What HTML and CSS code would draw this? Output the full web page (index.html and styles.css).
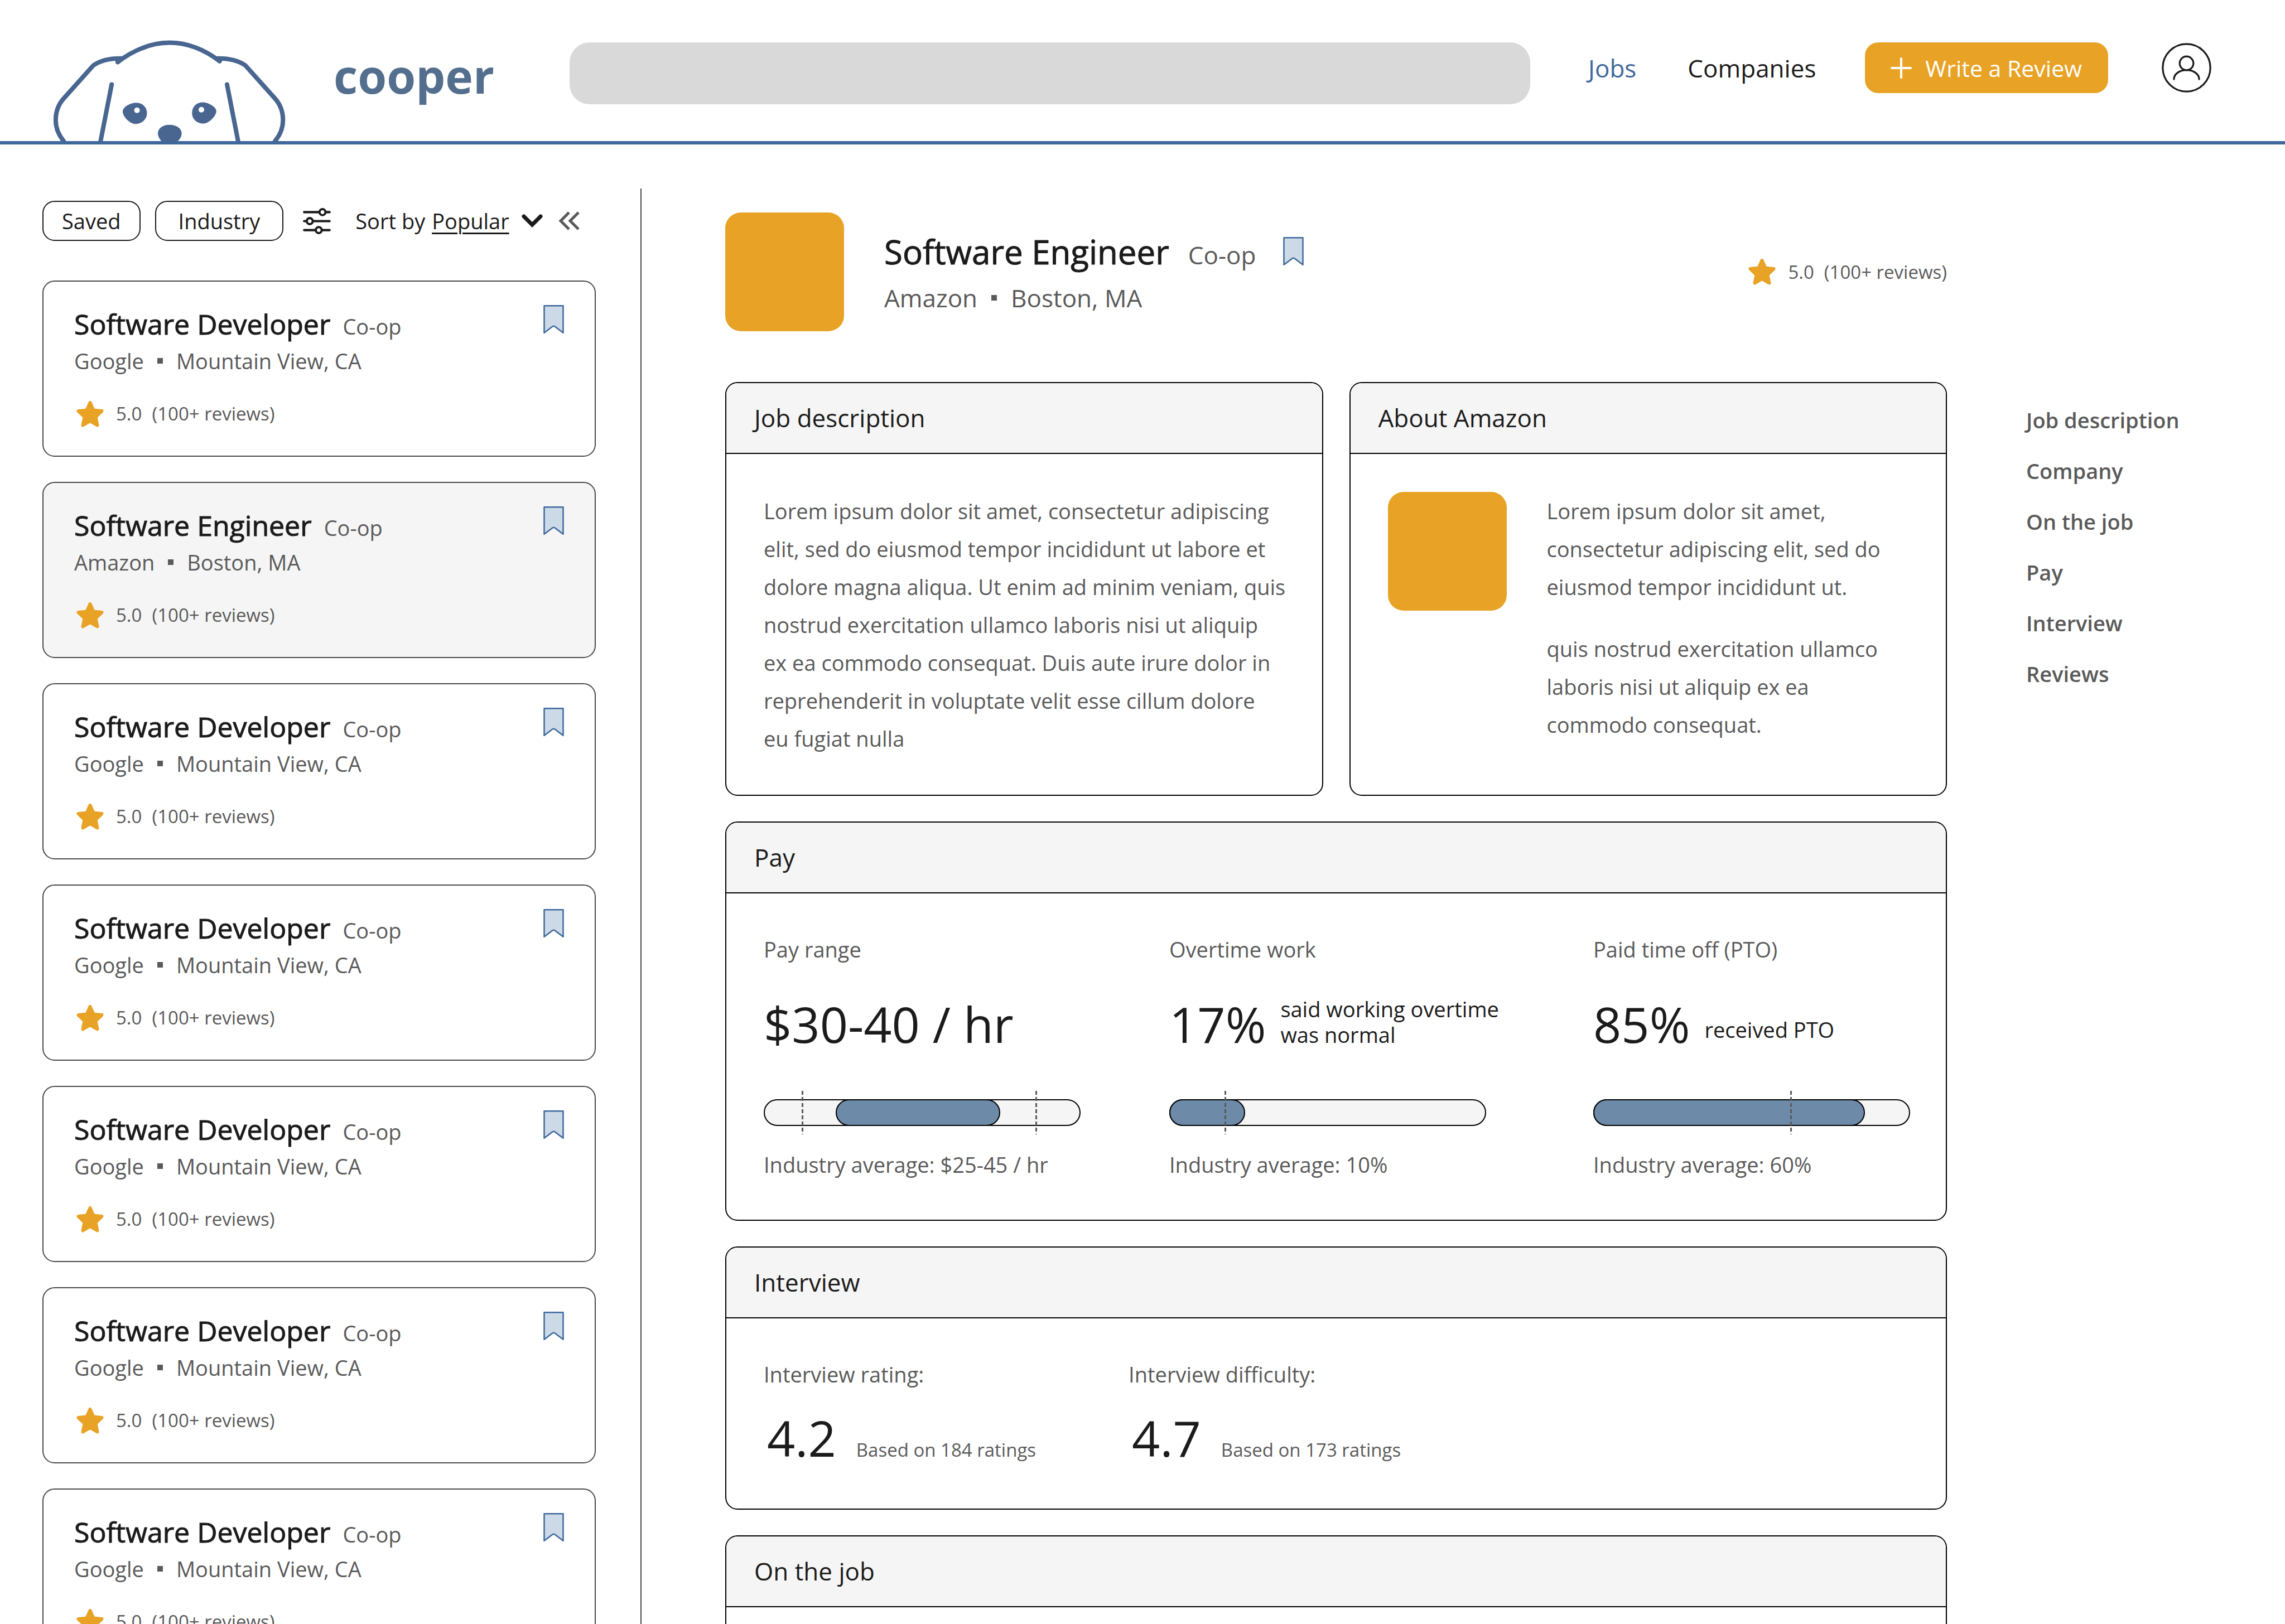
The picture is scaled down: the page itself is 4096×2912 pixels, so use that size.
FILE: index.html
```html
<!DOCTYPE html>
<html lang="en">
<head>
<meta charset="utf-8">
<title>cooper – Jobs</title>
<link rel="stylesheet" href="styles.css">
</head>
<body>
<svg class="sprite" aria-hidden="true">
  <symbol id="star" viewBox="0 0 49 47"><path d="M24.500 3L30.500 16.500L45.500 18L34.500 28.500L37.500 43.500L24.500 36L11.500 43.500L14.500 28.500L3.500 18L18.500 16.500Z" fill="#e8a326" stroke="#e8a326" stroke-width="6" stroke-linejoin="round"/></symbol>
  <symbol id="bookmark" viewBox="0 0 162 225"><path d="M6 6H156V219L89 169Q81 164 73 169L6 219Z" fill="#ccd9e6" stroke="#3e689d" stroke-width="11" stroke-linejoin="round"/></symbol>
</svg>

<header class="topbar">
  <a class="brand" href="#">
    <svg class="brand-dog" viewBox="0 0 1568 870" preserveAspectRatio="none" aria-hidden="true">
      <g class="dog-lines">
        <path d="M463 247C580 140 690 95 796 95S1010 140 1118 240"/>
        <path d="M463 247V222M1118 240V222"/>
        <path d="M485 219C420 218 355 232 305 275L115 535C82 580 64 640 64 706C64 770 82 820 115 870L130 900"/>
        <path d="M1104 219C1170 218 1235 232 1285 275L1475 535C1508 580 1526 640 1526 706C1526 770 1508 820 1475 870L1460 900"/>
        <path d="M424 424L348 900"/>
        <path d="M1166 424L1242 900"/>
      </g>
      <g fill="#486690">
        <path d="M495 638C495 600 545 568 582 568C620 568 651 600 651 650C651 700 615 735 578 735C540 735 495 675 495 638Z"/>
        <path d="M1097 635C1097 600 1045 565 1008 565C970 565 941 600 941 648C941 700 975 732 1014 732C1050 732 1097 670 1097 635Z"/>
        <path d="M721 810C721 768 755 741 796 741C840 741 874 770 874 808C874 835 862 855 850 870H743C730 850 721 830 721 810Z"/>
      </g>
      <ellipse cx="587" cy="627" rx="18" ry="22" fill="#fff"/>
      <ellipse cx="1001" cy="623" rx="18" ry="22" fill="#fff"/>
    </svg>
    <span class="brand-name">cooper</span>
  </a>
  <input class="search" type="search" aria-label="Search jobs">
  <nav class="topnav" aria-label="Main">
    <div class="topnav-links">
      <a class="topnav-link--active" href="#">Jobs</a>
      <a href="#">Companies</a>
    </div>
    <button class="review-btn" type="button">
      <svg class="plus" viewBox="0 0 38 38" aria-hidden="true"><path d="M19 2V36M2 19H36" stroke="#fff" stroke-width="4" stroke-linecap="round"/></svg>
      Write a Review
    </button>
    <button class="avatar" type="button" aria-label="Account">
      <svg viewBox="0 0 390 390" fill="none" stroke="#1b1b1b" stroke-width="14" stroke-linecap="round" aria-hidden="true"><circle cx="195" cy="195" r="187"/><circle cx="195" cy="160" r="54"/><path d="M96 285C96 245 140 213 195 213S294 245 294 285"/></svg>
    </button>
  </nav>
</header>

<div class="layout">
  <aside class="sidebar">
    <div class="filters">
      <button class="chip" type="button">Saved</button>
      <button class="chip chip--wide" type="button">Industry</button>
      <button class="icon-btn filter-btn" type="button" aria-label="Filters">
        <svg class="filter-icon" viewBox="0 0 74 70" fill="#fff" stroke="#1b1b1b" stroke-width="6" stroke-linecap="round" aria-hidden="true"><path d="M3 11H71M3 35H71M3 59H71"/><circle cx="52" cy="11" r="8"/><circle cx="18" cy="35" r="8"/><circle cx="42" cy="59" r="8"/></svg>
      </button>
      <label class="sort-label" for="sort">Sort by</label>
      <select class="sort-select" id="sort"><option>Popular</option></select>
      <svg class="chevron" viewBox="0 0 38 24" fill="none" stroke="#1b1b1b" stroke-width="7" stroke-linecap="round" aria-hidden="true"><path d="M4 4L19 19L34 4"/></svg>
      <button class="icon-btn" type="button" aria-label="Collapse list">
        <svg class="collapse-icon" viewBox="0 0 38 34" fill="none" stroke="#5a5a5a" stroke-width="5" aria-hidden="true"><path d="M19 2L4 17L19 32M36 2L21 17L36 32"/></svg>
      </button>
    </div>
    <div class="job-list">
      <article class="job-card">
        <div><div class="job-title-row"><h2 class="job-title">Software Developer</h2><span class="job-type">Co-op</span></div>
        <p class="job-place">Google <i class="dot"></i> Mountain View, CA</p>
        <p class="rating"><svg class="star"><use href="#star"/></svg><span>5.0</span><span>(100+ reviews)</span></p></div>
        <button class="icon-btn" type="button" aria-label="Save job"><svg class="bookmark"><use href="#bookmark"/></svg></button>
      </article>
      <article class="job-card job-card--selected">
        <div><div class="job-title-row"><h2 class="job-title">Software Engineer</h2><span class="job-type">Co-op</span></div>
        <p class="job-place">Amazon <i class="dot"></i> Boston, MA</p>
        <p class="rating"><svg class="star"><use href="#star"/></svg><span>5.0</span><span>(100+ reviews)</span></p></div>
        <button class="icon-btn" type="button" aria-label="Save job"><svg class="bookmark"><use href="#bookmark"/></svg></button>
      </article>
      <article class="job-card">
        <div><div class="job-title-row"><h2 class="job-title">Software Developer</h2><span class="job-type">Co-op</span></div>
        <p class="job-place">Google <i class="dot"></i> Mountain View, CA</p>
        <p class="rating"><svg class="star"><use href="#star"/></svg><span>5.0</span><span>(100+ reviews)</span></p></div>
        <button class="icon-btn" type="button" aria-label="Save job"><svg class="bookmark"><use href="#bookmark"/></svg></button>
      </article>
      <article class="job-card">
        <div><div class="job-title-row"><h2 class="job-title">Software Developer</h2><span class="job-type">Co-op</span></div>
        <p class="job-place">Google <i class="dot"></i> Mountain View, CA</p>
        <p class="rating"><svg class="star"><use href="#star"/></svg><span>5.0</span><span>(100+ reviews)</span></p></div>
        <button class="icon-btn" type="button" aria-label="Save job"><svg class="bookmark"><use href="#bookmark"/></svg></button>
      </article>
      <article class="job-card">
        <div><div class="job-title-row"><h2 class="job-title">Software Developer</h2><span class="job-type">Co-op</span></div>
        <p class="job-place">Google <i class="dot"></i> Mountain View, CA</p>
        <p class="rating"><svg class="star"><use href="#star"/></svg><span>5.0</span><span>(100+ reviews)</span></p></div>
        <button class="icon-btn" type="button" aria-label="Save job"><svg class="bookmark"><use href="#bookmark"/></svg></button>
      </article>
      <article class="job-card">
        <div><div class="job-title-row"><h2 class="job-title">Software Developer</h2><span class="job-type">Co-op</span></div>
        <p class="job-place">Google <i class="dot"></i> Mountain View, CA</p>
        <p class="rating"><svg class="star"><use href="#star"/></svg><span>5.0</span><span>(100+ reviews)</span></p></div>
        <button class="icon-btn" type="button" aria-label="Save job"><svg class="bookmark"><use href="#bookmark"/></svg></button>
      </article>
      <article class="job-card">
        <div><div class="job-title-row"><h2 class="job-title">Software Developer</h2><span class="job-type">Co-op</span></div>
        <p class="job-place">Google <i class="dot"></i> Mountain View, CA</p>
        <p class="rating"><svg class="star"><use href="#star"/></svg><span>5.0</span><span>(100+ reviews)</span></p></div>
        <button class="icon-btn" type="button" aria-label="Save job"><svg class="bookmark"><use href="#bookmark"/></svg></button>
      </article>
    </div>
  </aside>

  <div class="divider"></div>

  <main class="detail">
    <header class="detail-head">
      <div class="company-logo"></div>
      <div class="detail-heading">
        <div class="detail-title-row"><h1 class="detail-title">Software Engineer</h1><span class="job-type">Co-op</span>
          <button class="icon-btn detail-save" type="button" aria-label="Save job"><svg class="bookmark"><use href="#bookmark"/></svg></button></div>
        <p class="detail-place">Amazon <i class="dot"></i> Boston, MA</p>
      </div>
      <p class="rating"><svg class="star"><use href="#star"/></svg><span>5.0</span><span>(100+ reviews)</span></p>
    </header>

    <div class="panel-pair">
      <section class="panel" id="description">
        <h2 class="panel-title">Job description</h2>
        <div class="panel-body">
          <p class="copy">Lorem ipsum dolor sit amet, consectetur adipiscing<br>elit, sed do eiusmod tempor incididunt ut labore et<br>dolore magna aliqua. Ut enim ad minim veniam, quis<br>nostrud exercitation ullamco laboris nisi ut aliquip<br>ex ea commodo consequat. Duis aute irure dolor in<br>reprehenderit in voluptate velit esse cillum dolore<br>eu fugiat nulla</p>
        </div>
      </section>
      <section class="panel" id="company">
        <h2 class="panel-title">About Amazon</h2>
        <div class="panel-body about">
          <div class="company-logo"></div>
          <div class="about-text">
            <p class="copy">Lorem ipsum dolor sit amet,<br>consectetur adipiscing elit, sed do<br>eiusmod tempor incididunt ut.</p>
            <p class="copy">quis nostrud exercitation ullamco<br>laboris nisi ut aliquip ex ea<br>commodo consequat.</p>
          </div>
        </div>
      </section>
    </div>

    <section class="panel" id="pay">
      <h2 class="panel-title">Pay</h2>
      <div class="panel-body pay-grid">
        <div>
          <h3 class="stat-label">Pay range</h3>
          <div class="stat stat--pay"><span class="stat-value">$30-40 / hr</span></div>
          <div class="meter"><div class="meter-track"></div><div class="meter-fill" style="left:22.7%;width:51.9%"></div><div class="meter-mark" style="left:12%"></div><div class="meter-mark" style="left:85.8%"></div></div>
          <p class="stat-label">Industry average: $25-45 / hr</p>
        </div>
        <div>
          <h3 class="stat-label">Overtime work</h3>
          <div class="stat stat--pay"><span class="stat-value">17%</span><span class="stat-note">said working overtime<br>was normal</span></div>
          <div class="meter"><div class="meter-track"></div><div class="meter-fill" style="left:0;width:23.9%"></div><div class="meter-mark" style="left:17.4%"></div></div>
          <p class="stat-label">Industry average: 10%</p>
        </div>
        <div>
          <h3 class="stat-label">Paid time off (PTO)</h3>
          <div class="stat stat--pay"><span class="stat-value">85%</span><span class="stat-note stat-note--single">received PTO</span></div>
          <div class="meter"><div class="meter-track"></div><div class="meter-fill" style="left:0;width:85.8%"></div><div class="meter-mark" style="left:62.1%"></div></div>
          <p class="stat-label">Industry average: 60%</p>
        </div>
      </div>
    </section>

    <section class="panel" id="interview">
      <h2 class="panel-title">Interview</h2>
      <div class="panel-body interview-grid">
        <div class="score">
          <h3 class="stat-label">Interview rating:</h3>
          <div class="stat stat--score"><span class="stat-value">4.2</span><span class="score-note">Based on 184 ratings</span></div>
        </div>
        <div class="score">
          <h3 class="stat-label">Interview difficulty:</h3>
          <div class="stat stat--score"><span class="stat-value">4.7</span><span class="score-note">Based on 173 ratings</span></div>
        </div>
      </div>
    </section>

    <section class="panel" id="on-the-job">
      <h2 class="panel-title">On the job</h2>
      <div class="panel-body"></div>
    </section>
  </main>

  <nav class="section-nav" aria-label="Sections">
    <a href="#description">Job description</a>
    <a href="#company">Company</a>
    <a href="#on-the-job">On the job</a>
    <a href="#pay">Pay</a>
    <a href="#interview">Interview</a>
    <a href="#reviews">Reviews</a>
  </nav>
</div>
</body>
</html>
```
FILE: styles.css
```css
:root {
  --ink: #1b1b1b;
  --gray: #5a5a5a;
  --blue: #3e679a;
  --orange: #e8a326;
  --pale: #f5f5f5;
}

* { box-sizing: border-box; }

body {
  margin: 0;
  height: 100vh;
  display: flex;
  flex-direction: column;
  overflow: hidden;
  background: #fff;
  color: var(--gray);
  font-family: "Open Sans", sans-serif;
  font-size: 38px;
  line-height: 64px;
}

h1, h2, h3, p { margin: 0; font-weight: 400; }
a { color: inherit; text-decoration: none; }
button, input, select { font: inherit; color: inherit; }
svg { display: block; }
.sprite { position: absolute; width: 0; height: 0; }

.icon-btn { padding: 0; border: 0; background: none; cursor: pointer; }

/* top bar */
.topbar {
  flex: none;
  display: flex;
  align-items: flex-start;
  padding: 55px 132px 0 82px;
  border-bottom: 6px solid var(--blue);
}
.brand { display: flex; margin-right: 135px; }
.brand-dog { width: 437px; height: 198px; margin-right: 79px; }
.dog-lines { fill: none; stroke: #486690; stroke-width: 8px; stroke-linecap: round; stroke-linejoin: round; }
.dog-lines path { vector-effect: non-scaling-stroke; }
.brand-name { padding-top: 24px; font-size: 84px; line-height: 114px; font-weight: 700; color: #546f8e; }
.search {
  flex: 1;
  min-width: 0;
  height: 111px;
  margin: 21px 104px 0 0;
  padding: 0 40px;
  border: 0;
  border-radius: 36px;
  background: #d9d9d9;
  appearance: none;
}
.topnav { display: flex; align-items: center; height: 91px; margin-top: 21px; color: var(--ink); font-size: 44px; }
.topnav-links { display: flex; gap: 92px; margin-right: 88px; }
.topnav-link--active { color: var(--blue); }
.review-btn {
  display: flex;
  align-items: center;
  gap: 24px;
  height: 91px;
  padding: 0 47px 0 46px;
  border: 0;
  border-radius: 24px;
  background: var(--orange);
  color: #fff;
  font-size: 41px;
}
.plus { width: 38px; height: 38px; }
.avatar { width: 89px; height: 89px; margin-left: 96px; padding: 0; border: 0; background: none; }

.layout { flex: 1; min-height: 0; display: flex; }

/* job list */
.sidebar { flex: none; width: 1068px; padding: 101px 0 0 76px; }
.filters { display: flex; align-items: center; height: 72px; margin-bottom: 71px; color: var(--ink); }
.chip { height: 72px; padding: 0 33px; margin-right: 26px; border: 2px solid var(--ink); border-radius: 22px; background: #fff; }
.chip--wide { padding: 0 40px; margin-right: 35px; }
.filter-btn { margin-right: 44px; }
.filter-icon { width: 50px; height: 47px; }
.sort-label { margin-right: 12px; }
.sort-select { padding: 0; border: 0; background: none; appearance: none; text-decoration: underline; text-decoration-thickness: 3px; text-underline-offset: 6px; }
.chevron { width: 38px; height: 24px; margin: 0 28px 0 22px; }
.collapse-icon { width: 38px; height: 34px; }

.job-list { display: flex; flex-direction: column; gap: 45px; }
.job-card {
  display: flex;
  justify-content: space-between;
  align-items: flex-start;
  padding: 42px 55px 50px;
  border: 2px solid #4a4a4a;
  border-radius: 22px;
}
.job-card--selected { background: var(--pale); }
.job-title-row { display: flex; align-items: baseline; gap: 22px; line-height: 68px; }
.job-title { font-size: 50px; color: var(--ink); -webkit-text-stroke: 1px var(--ink); }
.job-type { line-height: 50px; }
.job-place { display: flex; align-items: center; gap: 24px; margin-bottom: 38px; }
.dot { width: 10px; height: 10px; background: var(--gray); }
.bookmark { width: 37px; height: 51px; }

.rating { display: flex; align-items: center; gap: 18px; padding-left: 4px; font-size: 33px; line-height: 50px; }
.star { width: 49px; height: 47px; margin-right: 4px; }

.divider { flex: none; width: 2px; margin: 79px 0 0 80px; background: #4a4a4a; }

/* job detail */
.detail { flex: 1; min-width: 0; display: flex; flex-direction: column; gap: 46px; padding: 122px 0 0 150px; }
.detail-head { display: flex; align-items: center; margin-bottom: 45px; }
.company-logo { flex: none; width: 213px; height: 213px; border-radius: 28px; background: var(--orange); }
.detail-heading { flex: 1; margin-left: 72px; font-size: 44px; }
.detail-title-row { display: flex; align-items: baseline; gap: 34px; line-height: 92px; }
.detail-title { font-size: 60px; color: var(--ink); -webkit-text-stroke: 1px var(--ink); }
.detail-save { align-self: center; margin-left: 14px; }
.detail-place { display: flex; align-items: center; gap: 25px; line-height: 74px; }

.panel-pair { display: grid; grid-template-columns: 1fr 1fr; gap: 47px; }
.panel { flex: none; border: 2px solid #000; border-radius: 22px; overflow: hidden; }
.panel-title { padding: 31px 50px 32px; border-bottom: 2px solid #000; background: var(--pale); color: var(--ink); font-size: 44px; line-height: 62px; }
.panel-body { padding: 68px 64px 67px 67px; }
.copy { line-height: 68px; white-space: nowrap; }
.about { display: flex; gap: 72px; }
.about-text { display: flex; flex-direction: column; gap: 43px; }

.pay-grid { display: grid; grid-template-columns: 1fr 601px 1fr; gap: 159px; }
.stat { display: flex; line-height: 120px; color: var(--ink); }
.stat-label { font-size: 38px; }
.stat-value { font-size: 88px; }
.stat--pay { align-items: flex-end; gap: 26px; margin: 42px 0 60px; }
.stat-note { margin-bottom: 18px; line-height: 46px; white-space: nowrap; }
.stat-note--single { margin-bottom: 27px; }

.meter { position: relative; max-width: 568px; height: 78px; margin-bottom: 22px; padding: 15px 0; }
.meter-track, .meter-fill { height: 48px; border: 2px solid #000; border-radius: 24px; background: var(--pale); }
.meter-fill { position: absolute; top: 15px; background: #6d8aa9; }
.meter-mark { position: absolute; top: 0; width: 3px; height: 78px; background: repeating-linear-gradient(var(--gray) 0 7px, transparent 7px 11px); }

.interview-grid { display: flex; gap: 166px; }
.stat--score { align-items: baseline; gap: 36px; margin-top: 22px; padding-left: 6px; }
.score-note { font-size: 33px; line-height: 50px; color: var(--gray); }

/* section links */
.section-nav { flex: none; width: 464px; margin-left: 142px; padding-top: 469px; display: flex; flex-direction: column; gap: 40px; font-weight: 600; line-height: 51px; }
```
